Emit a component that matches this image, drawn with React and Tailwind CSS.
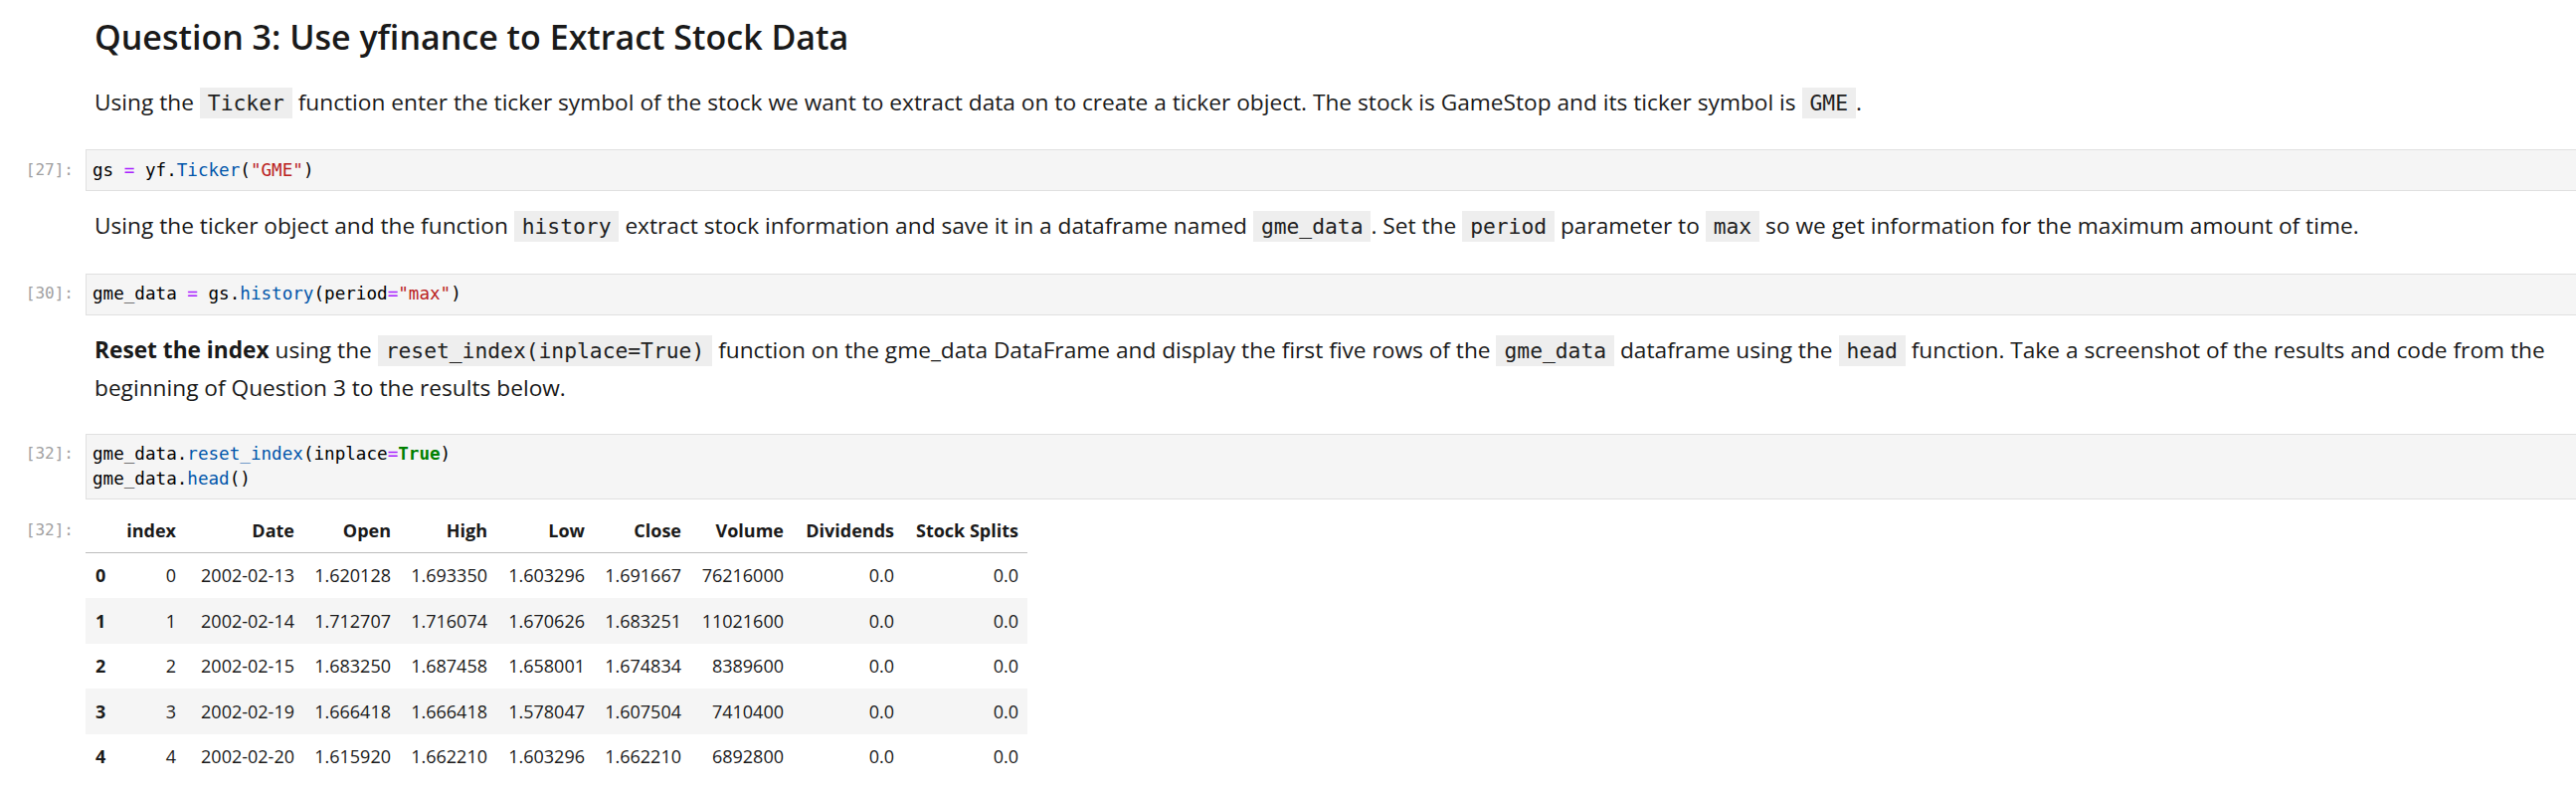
import React from "react";

const sans = "font-['Open_Sans',sans-serif]";
const mono = "font-['DejaVu_Sans_Mono',monospace]";

// inline code chip used in the markdown cells
const Code = ({ children }) => (
  <code className={`${mono} text-[21.3px] bg-[#eeeeee] px-[8px] py-[3.1px] text-[#212121]`}>
    {children}
  </code>
);

const Op = ({ children }) => <span className="text-[#aa22ff]">{children}</span>;
const Prop = ({ children }) => <span className="text-[#0055aa]">{children}</span>;
const Str = ({ children }) => <span className="text-[#ba2121]">{children}</span>;
const Kw = ({ children }) => <span className="text-[#008000] font-bold">{children}</span>;

const CodeCell = ({ prompt, className = "", children }) => (
  <div className={`flex ${className}`}>
    <div className={`${mono} w-[86px] shrink-0 pr-[12px] pt-[8.7px] text-right text-[16px] leading-[24.6px] text-[#a0a0a0]`}>
      [{prompt}]:
    </div>
    <div className="flex-1 bg-[#f5f5f5] border-y border-l border-[#e0e0e0] px-[6px] py-[7.7px]">
      <pre className={`${mono} text-[17.6px] leading-[24.6px] text-black`}>{children}</pre>
    </div>
  </div>
);

const Markdown = ({ className = "", children }) => (
  <div className={`${sans} pl-[95px] text-[22.7px] leading-[37.5px] text-[#1a1a1a] ${className}`}>
    {children}
  </div>
);

const columns = ["index", "Date", "Open", "High", "Low", "Close", "Volume", "Dividends", "Stock Splits"];
const widths = ["w-[31px]", "w-[69px]", "w-[119px]", "w-[97px]", "w-[97px]", "w-[98px]", "w-[97px]", "w-[103px]", "w-[111px]", "w-[125px]"];

const rows = [
  [0, "2002-02-13", "1.620128", "1.693350", "1.603296", "1.691667", "76216000", "0.0", "0.0"],
  [1, "2002-02-14", "1.712707", "1.716074", "1.670626", "1.683251", "11021600", "0.0", "0.0"],
  [2, "2002-02-15", "1.683250", "1.687458", "1.658001", "1.674834", "8389600", "0.0", "0.0"],
  [3, "2002-02-19", "1.666418", "1.666418", "1.578047", "1.607504", "7410400", "0.0", "0.0"],
  [4, "2002-02-20", "1.615920", "1.662210", "1.603296", "1.662210", "6892800", "0.0", "0.0"],
];

const DataFrame = () => (
  <table className={`${sans} table-fixed border-collapse w-[947px] text-[18px] text-[#1a1a1a]`}>
    <colgroup>
      {widths.map((w, i) => (
        <col key={i} className={w} />
      ))}
    </colgroup>
    <thead>
      <tr className="h-[45px] border-b border-[#bdbdbd]">
        <th />
        {columns.map((c) => (
          <th key={c} className="px-[9px] text-right font-bold whitespace-nowrap">
            {c}
          </th>
        ))}
      </tr>
    </thead>
    <tbody>
      {rows.map((r, i) => (
        <tr key={i} className={`h-[45.5px] ${i % 2 === 1 ? "bg-[#f5f5f5]" : ""}`}>
          <th className="pl-[10px] text-left font-bold">{i}</th>
          {r.map((v, j) => (
            <td key={j} className="px-[9px] text-right whitespace-nowrap">
              {v}
            </td>
          ))}
        </tr>
      ))}
    </tbody>
  </table>
);

export default function App() {
  return (
    <div className="w-[2590px] h-[801px] bg-white overflow-hidden">
      <h2 className={`${sans} pl-[95px] mt-[17px] text-[34px] leading-[40px] font-semibold text-[#1a1a1a]`}>
        Question 3: Use yfinance to Extract Stock Data
      </h2>

      <Markdown className="mt-[27.1px]">
        Using the <Code>Ticker</Code> function enter the ticker symbol of the stock we want to extract data on to
        create a ticker object. The stock is GameStop and its ticker symbol is <Code>GME</Code>.
      </Markdown>

      <CodeCell prompt="27" className="mt-[27.7px]">
        gs <Op>=</Op> yf.<Prop>Ticker</Prop>(<Str>"GME"</Str>)
      </CodeCell>

      <Markdown className="mt-[16px]">
        Using the ticker object and the function <Code>history</Code> extract stock information and save it in a
        dataframe named <Code>gme_data</Code>. Set the <Code>period</Code> parameter to <Code>max</Code> so we get
        information for the maximum amount of time.
      </Markdown>

      <CodeCell prompt="30" className="mt-[27.9px]">
        gme_data <Op>=</Op> gs.<Prop>history</Prop>(period<Op>=</Op>
        <Str>"max"</Str>)
      </CodeCell>

      <Markdown className="mt-[16.3px] whitespace-nowrap">
        <strong className="font-bold">Reset the index</strong> using the <Code>reset_index(inplace=True)</Code>{" "}
        function on the gme_data DataFrame and display the first five rows of the <Code>gme_data</Code> dataframe
        using the <Code>head</Code> function. Take a screenshot of the results and code from the
        <br />
        beginning of Question 3 to the results below.
      </Markdown>

      <CodeCell prompt="32" className="mt-[26.7px]">
        gme_data.<Prop>reset_index</Prop>(inplace<Op>=</Op>
        <Kw>True</Kw>){"\n"}gme_data.<Prop>head</Prop>()
      </CodeCell>

      <div className="flex mt-[8.7px]">
        <div className={`${mono} w-[86px] shrink-0 pr-[12px] pt-[9.7px] text-right text-[16px] leading-[24.6px] text-[#a0a0a0]`}>
          [32]:
        </div>
        <DataFrame />
      </div>
    </div>
  );
}
